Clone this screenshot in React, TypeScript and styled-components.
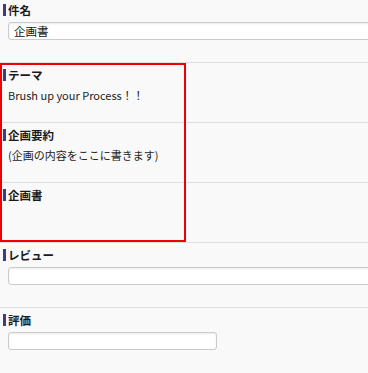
import styled, { createGlobalStyle } from 'styled-components';

const GlobalStyle = createGlobalStyle`
  html, body {
    margin: 0;
    padding: 0;
    background: #f9f9f9;
    overflow: hidden;
  }
  body {
    font-family: "Noto Sans CJK JP", "Noto Sans", sans-serif;
    color: #222;
  }
`;

const Page = styled.div`
  width: 368px;
  height: 373px;
  overflow: hidden;
  margin-top: -2px;
`;

const Section = styled.section<{ $withInput?: boolean }>`
  padding: 5px 0 ${props => (props.$withInput ? '22px' : '20px')};
  border-bottom: 1px solid #dedede;
`;

const Label = styled.h3`
  margin: 0;
  display: flex;
  align-items: center;
  height: 14px;
  font-size: 11.5px;
  font-weight: bold;
  line-height: 14px;
  color: #1a1a1a;
  &::before {
    content: '';
    display: block;
    width: 3px;
    height: 12px;
    margin: 0 2px 0 3px;
    background: #3f3b85;
  }
`;

const Body = styled.div`
  margin-top: 6px;
  min-height: 14px;
  padding-left: 8px;
  font-size: 11px;
  line-height: 14px;
  color: #222;
`;

const Field = styled.div<{ $width: number }>`
  margin: 5px 0 0 8px;
  width: ${props => props.$width}px;
  height: 18px;
  box-sizing: border-box;
  background: #fff;
  border: 1px solid #cbcbcb;
  border-radius: 3px;
  box-shadow: inset 0 1px 2px rgba(0, 0, 0, 0.08);
  padding: 0 5px;
  font-size: 11.5px;
  line-height: 16px;
  color: #111;
`;

const Highlight = styled.div`
  position: relative;
  &::after {
    content: '';
    position: absolute;
    left: 0;
    top: 0;
    bottom: 1px;
    width: 186px;
    box-sizing: border-box;
    border: 2px solid #f00000;
    pointer-events: none;
  }
`;

export default function App() {
  return (
    <>
      <GlobalStyle />
      <Page>
        <Section $withInput>
          <Label>件名</Label>
          <Field $width={380}>企画書</Field>
        </Section>
        <Highlight>
          <Section>
            <Label>テーマ</Label>
            <Body>Brush up your Process！！</Body>
          </Section>
          <Section>
            <Label>企画要約</Label>
            <Body>(企画の内容をここに書きます)</Body>
          </Section>
          <Section>
            <Label>企画書</Label>
            <Body />
          </Section>
        </Highlight>
        <Section $withInput>
          <Label>レビュー</Label>
          <Field $width={380} />
        </Section>
        <Section $withInput>
          <Label>評価</Label>
          <Field $width={209} />
        </Section>
      </Page>
    </>
  );
}
